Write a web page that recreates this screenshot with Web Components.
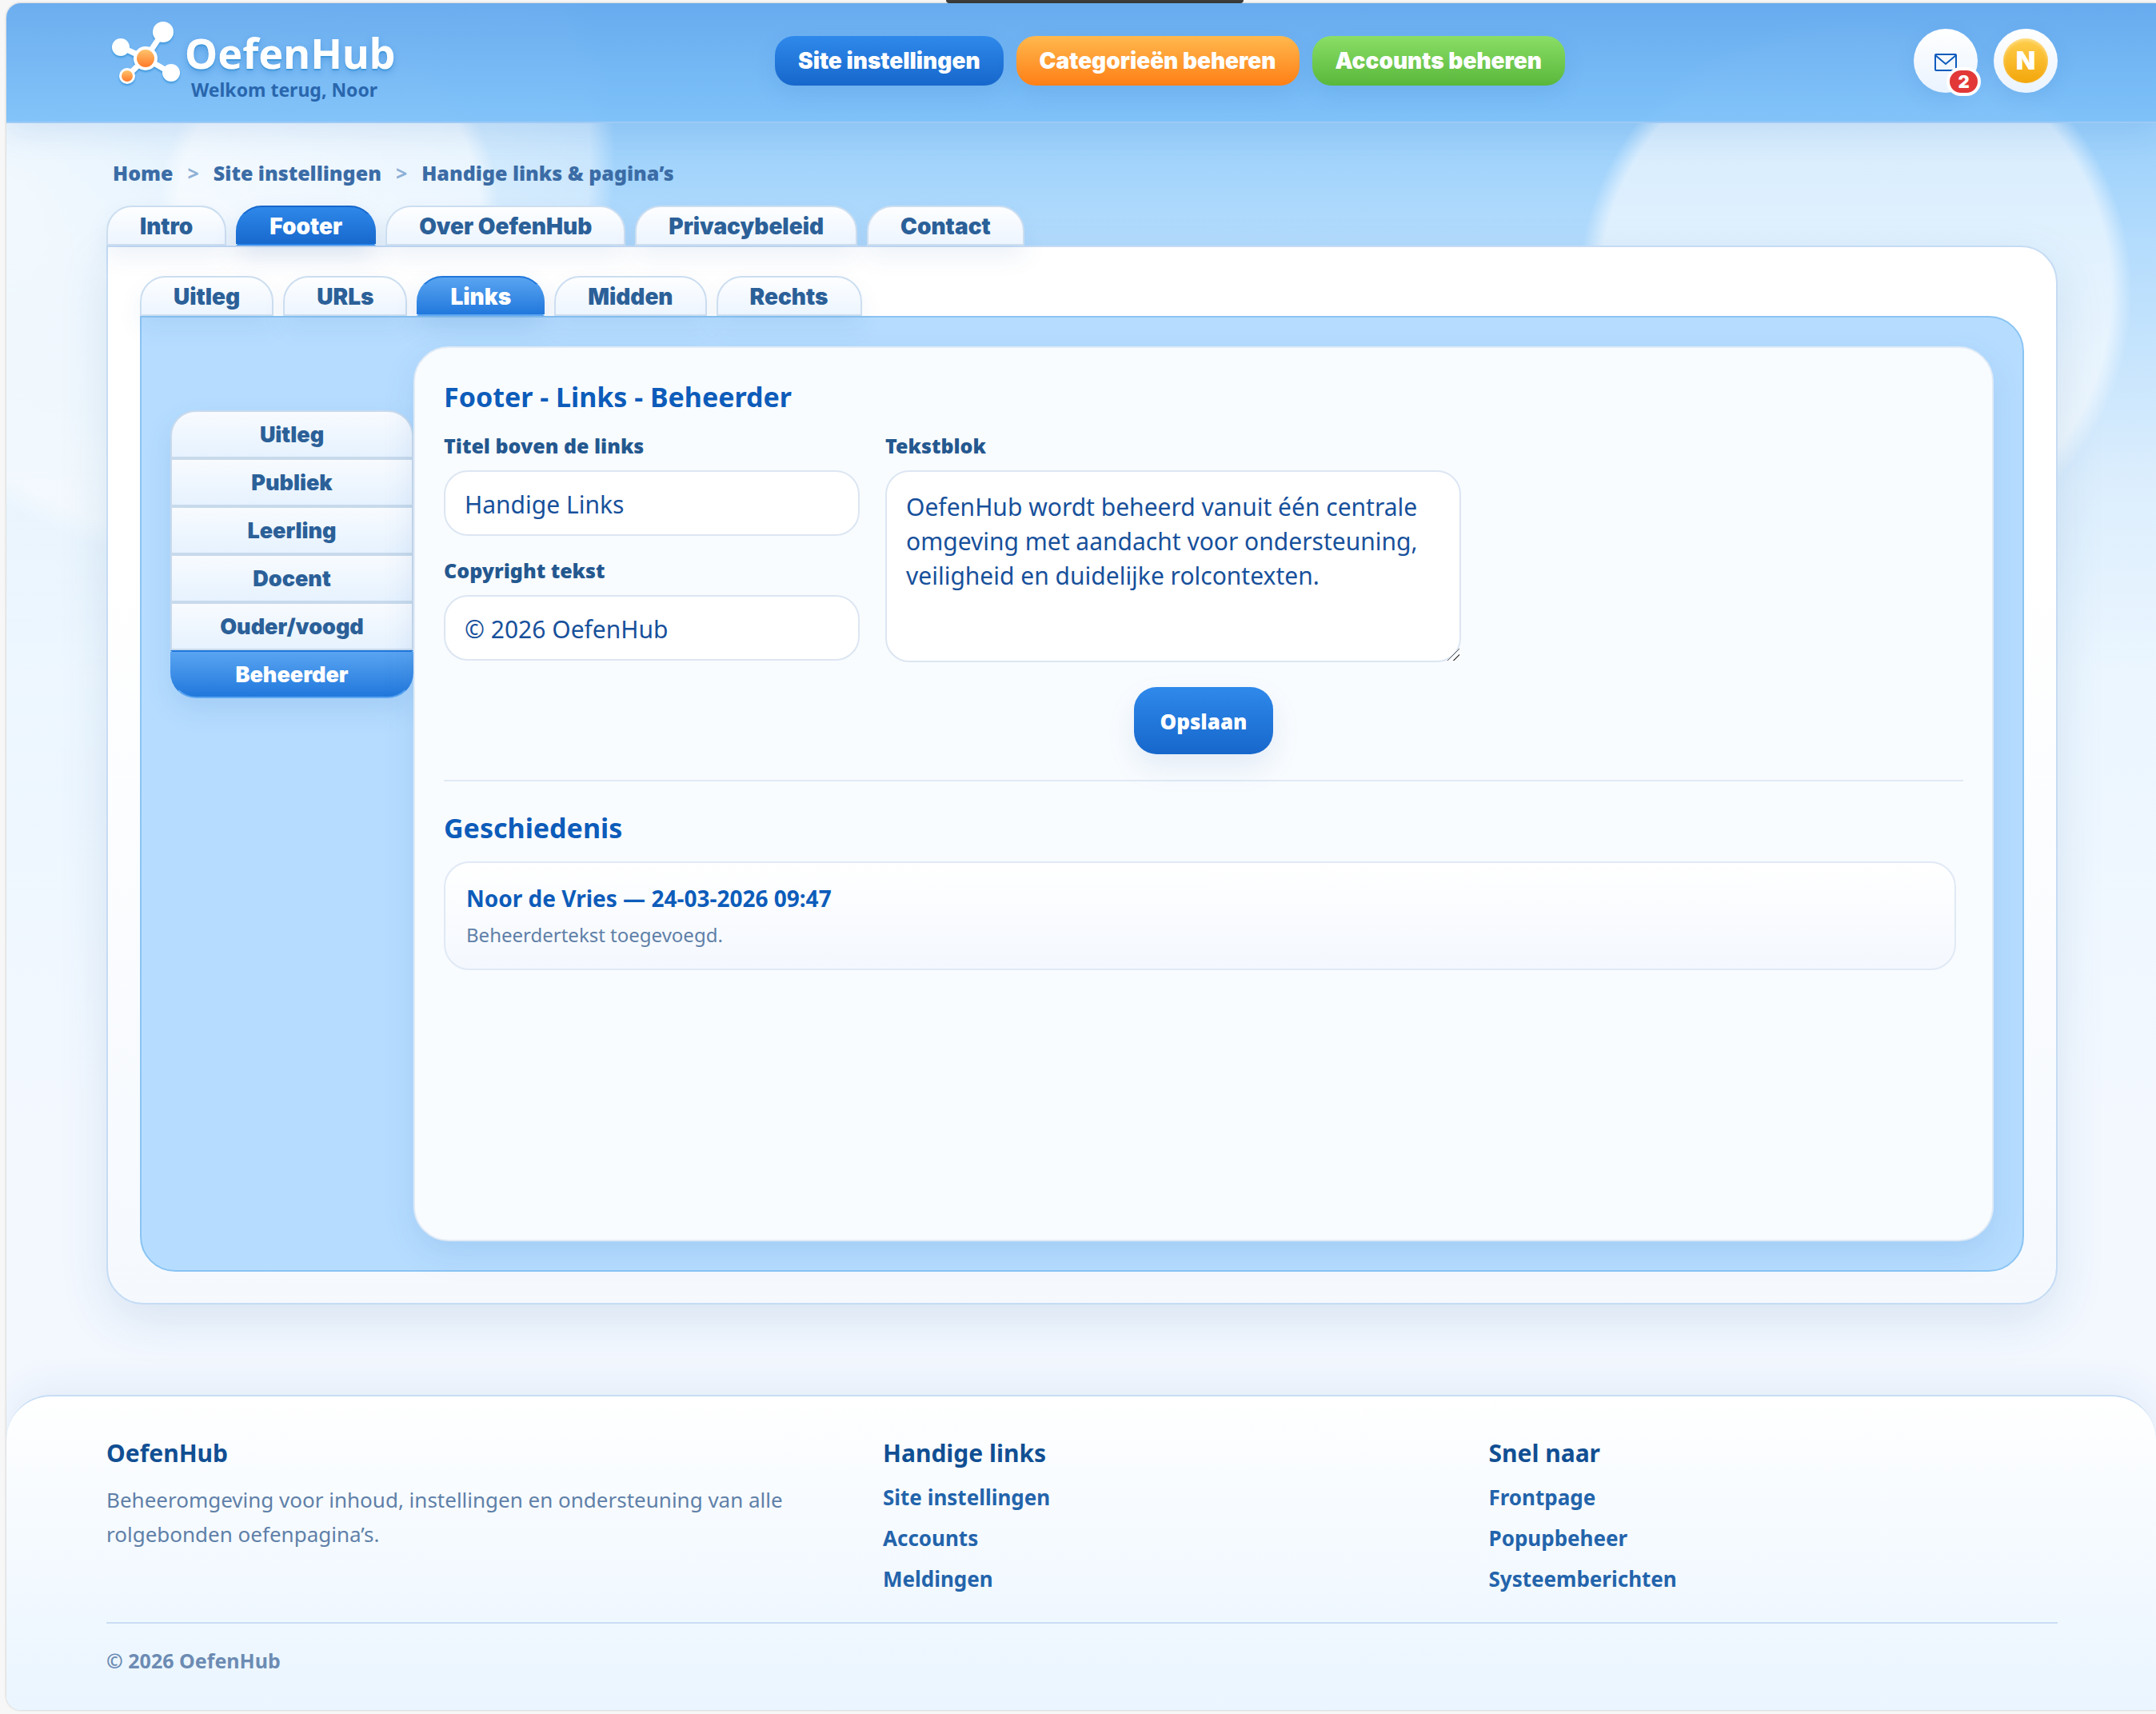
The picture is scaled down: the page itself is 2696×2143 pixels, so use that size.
<!DOCTYPE html>
<html lang="nl">
<head>
<meta charset="utf-8">
<meta name="viewport" content="width=device-width, initial-scale=1">
<title>OefenHub - Site instellingen</title>
<style>
  body {
    margin: 0;
    background: #f7f7f7;
    color: #17509b;
    font-family: "Noto Sans", "Open Sans", sans-serif;
  }
</style>
</head>
<body>

<oh-page>
  <oh-header slot="header" welcome="Welkom terug, Noor">
    <oh-pill color="blue" href="#instellingen">Site instellingen</oh-pill>
    <oh-pill color="orange" href="#categorieen">Categorieën beheren</oh-pill>
    <oh-pill color="green" href="#accounts">Accounts beheren</oh-pill>
    <oh-mail slot="actions" count="2"></oh-mail>
    <oh-avatar slot="actions">N</oh-avatar>
  </oh-header>

  <oh-crumbs items="Home|Site instellingen|Handige links &amp; pagina’s"></oh-crumbs>
  <oh-tabs items="Intro|Footer|Over OefenHub|Privacybeleid|Contact" active="Footer" label="Pagina's"></oh-tabs>
  <oh-panel>
    <oh-tabs class="sub" items="Uitleg|URLs|Links|Midden|Rechts" active="Links" label="Onderdelen"></oh-tabs>
    <oh-board>
      <oh-side slot="side" items="Uitleg|Publiek|Leerling|Docent|Ouder/voogd|Beheerder" active="Beheerder"></oh-side>
      <oh-editor heading="Footer - Links - Beheerder">
        <oh-field label="Titel boven de links" value="Handige Links"></oh-field>
        <oh-field label="Copyright tekst" value="© 2026 OefenHub"></oh-field>
        <oh-field slot="wide" label="Tekstblok" multiline value="OefenHub wordt beheerd vanuit één centrale omgeving met aandacht voor ondersteuning, veiligheid en duidelijke rolcontexten."></oh-field>
        <oh-history slot="history" heading="Geschiedenis">
          <oh-entry who="Noor de Vries — 24-03-2026 09:47">Beheerdertekst toegevoegd.</oh-entry>
        </oh-history>
      </oh-editor>
    </oh-board>
  </oh-panel>

  <oh-footer slot="footer" copyright="© 2026 OefenHub">
    <oh-footer-col heading="OefenHub">Beheeromgeving voor inhoud, instellingen en ondersteuning van alle rolgebonden oefenpagina’s.</oh-footer-col>
    <oh-footer-col heading="Handige links" links="Site instellingen|Accounts|Meldingen"></oh-footer-col>
    <oh-footer-col heading="Snel naar" links="Frontpage|Popupbeheer|Systeemberichten"></oh-footer-col>
  </oh-footer>
</oh-page>

<script>
// every element renders once, from its attributes
class OhElement extends HTMLElement {
  connectedCallback() {
    if (this.shadowRoot) return;
    const root = this.attachShadow({ mode: "open" });
    root.innerHTML = `<style>*, :host { box-sizing: border-box; }</style>` + this.render();
  }
  attr(name) {
    return (this.getAttribute(name) || "").replace(/&/g, "&amp;").replace(/</g, "&lt;");
  }
  list(name) {
    return this.attr(name).split("|").filter(Boolean);
  }
}

// page frame with the sky behind it
customElements.define("oh-page", class extends OhElement {
  render() {
    return `
      <style>
        :host {
          display: flex;
          flex-direction: column;
          min-height: 100vh;
        }
        .notch {
          display: flex;
          justify-content: center;
          height: 4px;
          padding-left: 42px;
        }
        .notch span {
          width: 372px;
          background: #3c3c3c;
          border-radius: 0 0 8px 8px;
        }
        .frame {
          flex: 1;
          display: flex;
          flex-direction: column;
          margin: 0 0 5px 8px;
          border-radius: 18px 0 0 18px;
          overflow: hidden;
          box-shadow: 0 0 3px rgba(0, 0, 0, .25);
          background:
            radial-gradient(circle at 86% 361px, rgba(255,255,255,.6) 320px, rgba(255,255,255,0) 346px),
            radial-gradient(circle at 15% 252px, rgba(255,255,255,.55) 188px, rgba(255,255,255,0) 212px),
            radial-gradient(circle at 9.5% 193px, rgba(255,255,255,.42) 474px, rgba(255,255,255,0) 506px),
            radial-gradient(circle at 0 240px, rgba(255,255,255,.75) 0, rgba(255,255,255,0) 760px),
            linear-gradient(180deg, #7fc2fa 0, #9dd1fb 170px, #b4dcfd 300px, #dceefd 600px, #ebf6ff 840px, #f3f8ff 1400px, #f3f8ff 100%);
        }
        main {
          flex: 1;
          display: flex;
          flex-direction: column;
          padding: 45px 123px 113px 125px;
        }
      </style>
      <div class="notch"><span></span></div>
      <div class="frame">
        <slot name="header"></slot>
        <main><slot></slot></main>
        <slot name="footer"></slot>
      </div>`;
  }
});

customElements.define("oh-header", class extends OhElement {
  render() {
    return `
      <style>
        :host {
          position: relative;
          display: block;
          background: linear-gradient(180deg, rgba(102,170,238,.95), rgba(125,193,249,.95));
          border-bottom: 2px solid #9fcaf5;
          box-shadow: 0 12px 36px rgba(40, 110, 190, .12);
        }
        header {
          display: flex;
          align-items: center;
          height: 148px;
          padding: 0 123px 4px 125px;
        }
        .brand {
          display: flex;
          flex: 0 0 400px;
          padding: 0 0 2px 5px;
          color: #fff;
          text-decoration: none;
        }
        svg {
          width: 92px;
          height: 92px;
          filter: drop-shadow(0 2px 1px #3f98dc);
        }
        .words {
          padding: 16px 0 0 1px;
        }
        .name {
          display: block;
          font-size: 52px;
          font-weight: 700;
          line-height: 58px;
          text-shadow: 0 2px 1px #3f98dc, 0 4px 8px rgba(40, 120, 200, .4);
        }
        .welcome {
          display: block;
          padding-left: 8px;
          color: #2966ad;
          font-size: 23px;
          font-weight: 700;
          line-height: 34px;
        }
        nav {
          flex: 1;
          display: flex;
          justify-content: center;
          gap: 16px;
        }
        .actions {
          display: flex;
          gap: 20px;
        }
      </style>
      <header>
        <a class="brand" href="#home">
          <svg viewBox="0 0 92 92" aria-hidden="true">
            <defs>
              <linearGradient id="o" x1="0" y1="0" x2="0" y2="1">
                <stop offset="0" stop-color="#ffc36b"/>
                <stop offset="1" stop-color="#ff7a2b"/>
              </linearGradient>
            </defs>
            <g stroke="#fff" stroke-width="7">
              <path d="M44 52 66 19M44 52 14 38M44 52 77 71M44 52 22 73"/>
            </g>
            <g fill="#fff">
              <circle cx="66" cy="19" r="13"/>
              <circle cx="13" cy="38" r="11"/>
              <circle cx="76" cy="70" r="11"/>
              <circle cx="44" cy="52" r="15"/>
              <circle cx="21" cy="74" r="10"/>
            </g>
            <circle cx="44" cy="52" r="11" fill="url(#o)"/>
            <circle cx="21" cy="74" r="7" fill="url(#o)"/>
          </svg>
          <span class="words">
            <span class="name">OefenHub</span>
            <span class="welcome">${this.attr("welcome")}</span>
          </span>
        </a>
        <nav aria-label="Beheer"><slot></slot></nav>
        <div class="actions"><slot name="actions"></slot></div>
      </header>`;
  }
});

customElements.define("oh-pill", class extends OhElement {
  render() {
    return `
      <style>
        :host {
          display: block;
          --from: #2f89eb;
          --to: #1767cb;
        }
        :host([color="orange"]) { --from: #ffb84d; --to: #ff7f16; }
        :host([color="green"]) { --from: #8ade66; --to: #59b73c; }
        a {
          display: block;
          padding: 0 29px;
          border-radius: 24px;
          background: linear-gradient(180deg, var(--from), var(--to));
          box-shadow: 0 10px 28px rgba(30, 90, 170, .1);
          color: #fff;
          font: 900 28px/62px Inter, "Noto Sans", sans-serif;
          text-decoration: none;
          white-space: nowrap;
        }
      </style>
      <a href="${this.attr("href")}"><slot></slot></a>`;
  }
});

customElements.define("oh-mail", class extends OhElement {
  render() {
    return `
      <style>
        :host { display: block; }
        button {
          position: relative;
          display: grid;
          place-items: center;
          width: 80px;
          height: 80px;
          padding: 0;
          border: 0;
          border-radius: 50%;
          background: linear-gradient(180deg, #fff, #eaf3ff);
          box-shadow: 0 8px 24px rgba(30, 90, 170, .1);
        }
        svg {
          width: 28px;
          height: 22px;
          margin-top: 4px;
        }
        span {
          position: absolute;
          right: -4px;
          bottom: -4px;
          width: 43px;
          border: 4px solid #fff;
          border-radius: 18px;
          background: #e23838;
          color: #fff;
          font: 900 22px/28px Inter, "Noto Sans", sans-serif;
          text-align: center;
        }
      </style>
      <button type="button" aria-label="Berichten">
        <svg viewBox="0 0 28 22" fill="none" stroke="#0b5bbd" stroke-width="2" aria-hidden="true">
          <rect x="1" y="1" width="26" height="20" rx="1"/>
          <path d="M1 2 14 13 27 2"/>
        </svg>
        <span>${this.attr("count")}</span>
      </button>`;
  }
});

customElements.define("oh-avatar", class extends OhElement {
  render() {
    return `
      <style>
        :host { display: block; }
        button {
          display: grid;
          place-items: center;
          width: 80px;
          height: 80px;
          padding: 0;
          border: 0;
          border-radius: 50%;
          background: linear-gradient(180deg, #fff, #eaf3ff);
          box-shadow: 0 8px 24px rgba(30, 90, 170, .1);
        }
        span {
          width: 56px;
          height: 56px;
          border-radius: 50%;
          background: linear-gradient(180deg, #ffcf4d, #f3a60a);
          box-shadow: inset 0 2px 4px rgba(255, 255, 255, .4);
          color: #fff;
          font: 900 32px/56px Inter, "Noto Sans", sans-serif;
          text-align: center;
        }
      </style>
      <button type="button"><span><slot></slot></span></button>`;
  }
});

customElements.define("oh-crumbs", class extends OhElement {
  render() {
    const links = this.list("items").map((t) => `<li><a href="#">${t}</a></li>`).join("");
    return `
      <style>
        :host {
          display: block;
          padding: 0 8px;
          margin-bottom: 24px;
        }
        ol {
          display: flex;
          margin: 0;
          padding: 0;
          list-style: none;
          font-size: 25px;
          line-height: 34px;
        }
        li + li::before {
          content: ">";
          margin: 0 18px;
          color: #8fb0d6;
          font-weight: 700;
        }
        a {
          color: #3b6ca6;
          font-weight: 900;
          text-decoration: none;
        }
      </style>
      <nav aria-label="Kruimelpad"><ol>${links}</ol></nav>`;
  }
});

customElements.define("oh-tabs", class extends OhElement {
  render() {
    const active = this.attr("active");
    const tabs = this.list("items").map((t) =>
      `<button type="button" role="tab" aria-selected="${t === active}">${t}</button>`).join("");
    return `
      <style>
        :host {
          position: relative;
          display: block;
          --from: #2f89eb;
          --to: #1767cb;
        }
        :host(.sub) { --from: #5ba6f2; --to: #1f76db; }
        div {
          display: flex;
          gap: 12px;
        }
        button {
          height: 50px;
          padding: 2px 40px 0;
          border: 2px solid #ccdef0;
          border-radius: 32px 32px 0 0;
          background: linear-gradient(180deg, #fdfeff, #edf5ff);
          box-shadow: 0 14px 30px rgba(30, 90, 170, .08);
          color: #2b6098;
          font: 900 28px/44px Inter, "Noto Sans", sans-serif;
          white-space: nowrap;
        }
        button[aria-selected="true"] {
          border-color: var(--to) transparent var(--from);
          background: linear-gradient(180deg, var(--from), var(--to)) border-box;
          color: #fff;
          box-shadow: 0 14px 30px rgba(30, 90, 170, .16);
        }
      </style>
      <div role="tablist" aria-label="${this.attr("label")}">${tabs}</div>`;
  }
});

customElements.define("oh-panel", class extends OhElement {
  render() {
    return `
      <style>
        :host {
          flex: 1;
          display: flex;
          flex-direction: column;
          padding: 36px 40px 39px;
          border: 2px solid #c6dcf4;
          border-radius: 0 46px 46px 46px;
          background: linear-gradient(180deg, #fff, #fff 30%, #f5f9fe);
          box-shadow: 0 20px 60px rgba(30, 90, 150, .13);
        }
      </style>
      <slot></slot>`;
  }
});

customElements.define("oh-board", class extends OhElement {
  render() {
    return `
      <style>
        :host {
          flex: 1;
          display: grid;
          grid-template-columns: 304px minmax(0, 1fr);
          padding: 36px;
          border: 2px solid #8ac4f3;
          border-radius: 0 44px 44px 44px;
          background: #b6ddff;
        }
      </style>
      <slot name="side"></slot>
      <slot></slot>`;
  }
});

customElements.define("oh-side", class extends OhElement {
  render() {
    const active = this.attr("active");
    const items = this.list("items").map((t) =>
      `<button type="button"${t === active ? ' aria-current="true"' : ""}>${t}</button>`).join("");
    return `
      <style>
        :host {
          display: block;
          padding-top: 80px;
        }
        nav {
          display: flex;
          flex-direction: column;
          border-radius: 32px;
          box-shadow: 0 14px 34px rgba(30, 90, 170, .12);
        }
        button {
          height: 60px;
          padding: 2px 0 0;
          border: 2px solid #c8daec;
          background: linear-gradient(180deg, #f8fbff, #e6f2fe);
          color: #2b6098;
          font: 900 27px/54px Inter, "Noto Sans", sans-serif;
        }
        button:first-child { border-radius: 32px 32px 0 0; }
        button:last-child { border-radius: 0 0 32px 32px; }
        button[aria-current] {
          border-color: #1f76db transparent #5ba6f2;
          background: linear-gradient(180deg, #5ba6f2, #1f76db) border-box;
          color: #fff;
        }
      </style>
      <nav aria-label="Rollen">${items}</nav>`;
  }
});

customElements.define("oh-editor", class extends OhElement {
  render() {
    return `
      <style>
        :host {
          display: block;
          padding: 37px 36px 36px;
          border: 2px solid #e1ebf6;
          border-radius: 44px;
          background: #f9fcff;
          box-shadow: 0 14px 40px rgba(30, 90, 170, .12);
        }
        h2 {
          margin: 0 0 20px;
          color: #0d5cba;
          font-size: 34px;
          font-weight: 700;
          line-height: 48px;
        }
        .fields {
          display: grid;
          grid-template-columns: minmax(0, 520px) minmax(0, 720px);
          gap: 32px;
        }
        .narrow {
          display: flex;
          flex-direction: column;
          gap: 26px;
        }
        .buttons {
          display: flex;
          justify-content: center;
          padding: 31px 0 32px;
          border-bottom: 2px solid #e0eaf5;
        }
        button {
          height: 84px;
          padding: 2px 32px 0;
          border: 0;
          border-radius: 28px;
          background: linear-gradient(180deg, #2f89eb, #1767cb);
          box-shadow: 0 16px 36px rgba(30, 90, 170, .1);
          color: #fff;
          font: 900 26px "Noto Sans", sans-serif;
        }
      </style>
      <form>
        <h2>${this.attr("heading")}</h2>
        <div class="fields">
          <div class="narrow"><slot></slot></div>
          <slot name="wide"></slot>
        </div>
        <div class="buttons"><button type="button">Opslaan</button></div>
      </form>
      <slot name="history"></slot>`;
  }
});

customElements.define("oh-field", class extends OhElement {
  render() {
    const value = this.attr("value");
    const control = this.hasAttribute("multiline")
      ? `<textarea id="control">${value}</textarea>`
      : `<input id="control" type="text" value="${value}">`;
    return `
      <style>
        :host { display: block; }
        label {
          display: block;
          margin-bottom: 14px;
          color: #24588f;
          font-size: 25px;
          font-weight: 900;
          line-height: 34px;
        }
        input, textarea {
          display: block;
          width: 100%;
          border: 2px solid #dce6f2;
          border-radius: 30px;
          outline: 0;
          background: #fff;
          color: #17509b;
          font: 400 30px/43px "Noto Sans", sans-serif;
        }
        input {
          height: 82px;
          padding: 2px 24px 0;
        }
        textarea {
          height: 240px;
          padding: 22px 24px;
          resize: vertical;
        }
        textarea::-webkit-resizer {
          background: linear-gradient(135deg, transparent 47%, #555 47% 53%, transparent 53% 71%, #555 71% 77%, transparent 77%);
        }
      </style>
      <label for="control">${this.attr("label")}</label>
      ${control}`;
  }
});

customElements.define("oh-history", class extends OhElement {
  render() {
    return `
      <style>
        :host {
          display: block;
          padding: 34px 9px 0 0;
        }
        h2 {
          margin: 0 0 18px;
          color: #0d5cba;
          font-size: 34px;
          font-weight: 700;
          line-height: 48px;
        }
      </style>
      <h2>${this.attr("heading")}</h2>
      <slot></slot>`;
  }
});

customElements.define("oh-entry", class extends OhElement {
  render() {
    return `
      <style>
        :host {
          display: block;
          padding: 24px 26px;
          border: 2px solid #e0e9f5;
          border-radius: 32px;
          background: linear-gradient(180deg, #fff, #f4f8fe);
        }
        strong {
          display: block;
          margin-bottom: 8px;
          color: #0d5cba;
          font-size: 28px;
          font-weight: 700;
          line-height: 40px;
        }
        p {
          margin: 0;
          color: #5f80a8;
          font-size: 24px;
          line-height: 36px;
        }
      </style>
      <strong>${this.attr("who")}</strong>
      <p><slot></slot></p>`;
  }
});

customElements.define("oh-footer", class extends OhElement {
  render() {
    return `
      <style>
        :host {
          display: block;
          padding: 49px 123px 44px 125px;
          border-top: 2px solid #c6dcf4;
          border-radius: 56px 56px 0 0;
          background: linear-gradient(180deg, #fff, #f9fcff 25%, #eaf5ff);
          box-shadow: 0 -12px 44px rgba(30, 90, 150, .07);
        }
        .cols {
          display: grid;
          grid-template-columns: 13fr 10fr 10fr;
          gap: 46px;
          padding-bottom: 28px;
          border-bottom: 2px solid #c9def4;
        }
        small {
          display: block;
          padding-top: 28px;
          color: #6c8bb3;
          font-size: 25px;
          font-weight: 700;
          line-height: 36px;
        }
      </style>
      <footer>
        <div class="cols"><slot></slot></div>
        <small>${this.attr("copyright")}</small>
      </footer>`;
  }
});

customElements.define("oh-footer-col", class extends OhElement {
  render() {
    const links = this.list("links").map((t) => `<li><a href="#">${t}</a></li>`).join("");
    return `
      <style>
        :host {
          display: block;
          color: #5f80a8;
          font-size: 26px;
          line-height: 43px;
        }
        h3 {
          margin: 0 0 15px;
          color: #114f93;
          font-size: 30px;
          font-weight: 700;
          line-height: 44px;
        }
        p, ul {
          margin: 0;
          padding: 0;
          list-style: none;
        }
        ul {
          margin-top: -7px;
          font-weight: 700;
          line-height: 51px;
        }
        a {
          color: #2364ab;
          text-decoration: none;
        }
      </style>
      <h3>${this.attr("heading")}</h3>
      ${links ? `<ul>${links}</ul>` : `<p><slot></slot></p>`}`;
  }
});
</script>
</body>
</html>
